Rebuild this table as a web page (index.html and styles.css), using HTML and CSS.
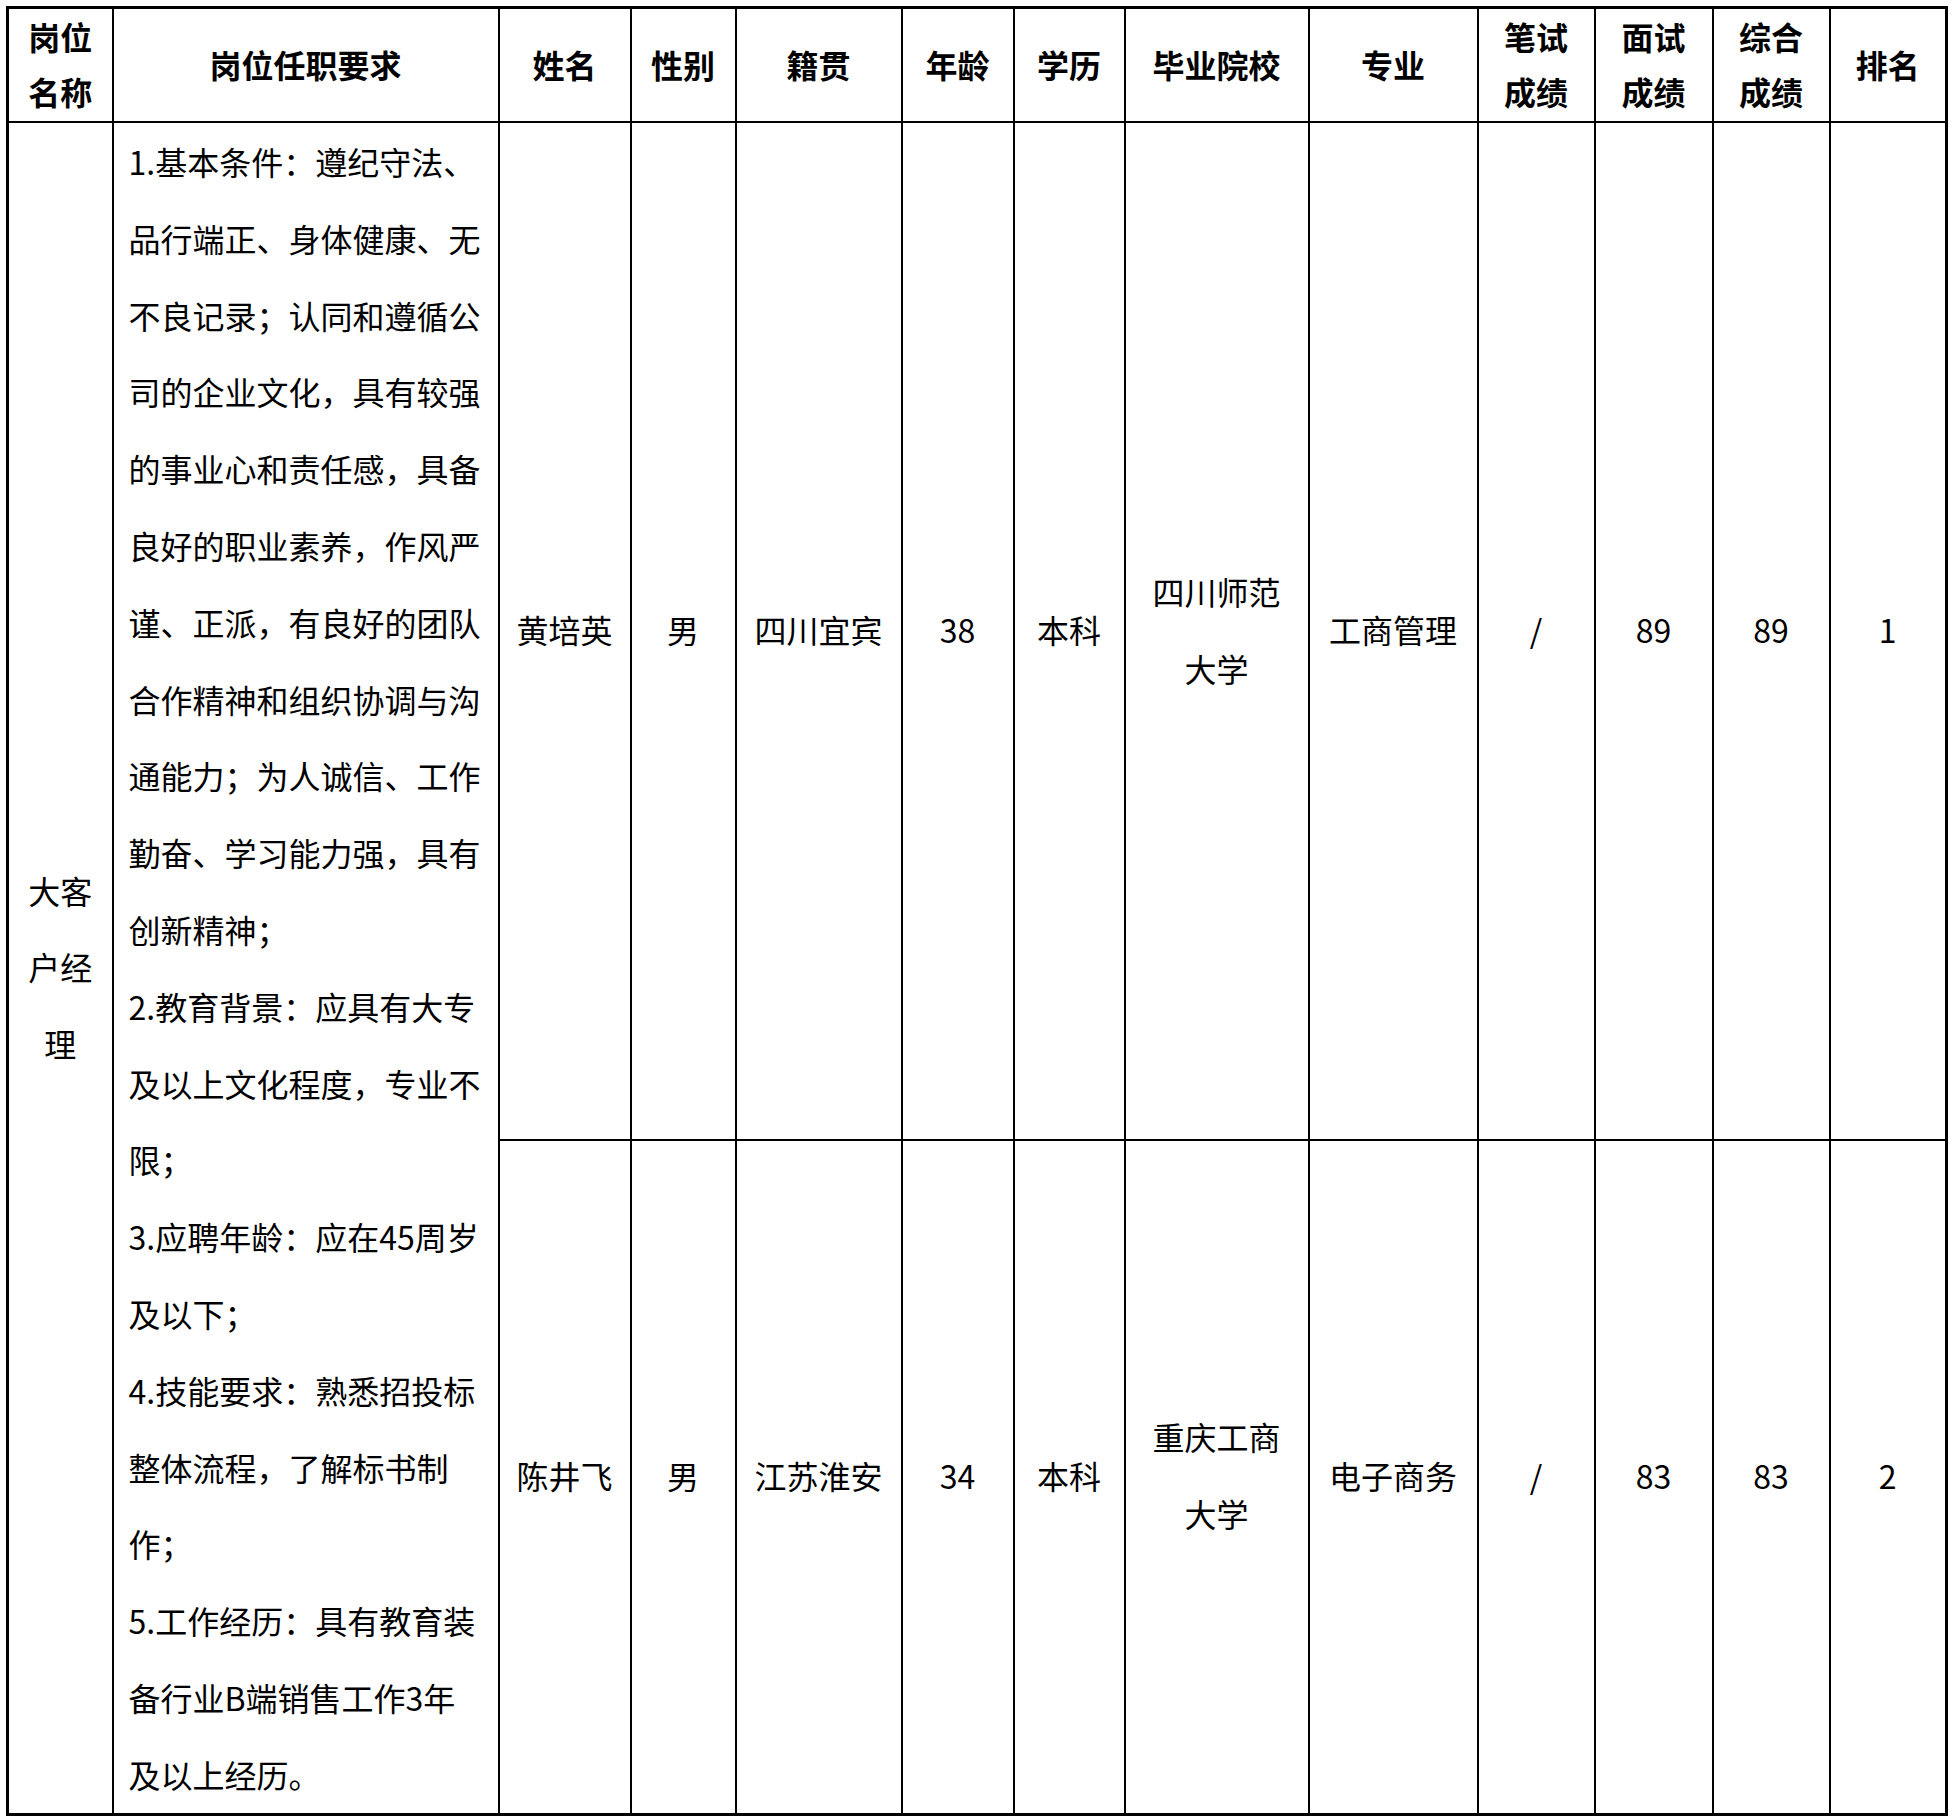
FILE: index.html
```html
<!DOCTYPE html>
<html lang="zh-CN">
<head>
<meta charset="utf-8">
<title>岗位任职要求</title>
<link rel="stylesheet" href="styles.css">
</head>
<body>
<table class="grid">
  <colgroup>
    <col class="w-post">
    <col class="w-req">
    <col class="w-name">
    <col class="w-sex">
    <col class="w-origin">
    <col class="w-age">
    <col class="w-edu">
    <col class="w-school">
    <col class="w-major">
    <col class="w-score">
    <col class="w-score2">
    <col class="w-score">
    <col class="w-score">
  </colgroup>
  <tr class="head">
    <th>岗位名称</th>
    <th>岗位任职要求</th>
    <th>姓名</th>
    <th>性别</th>
    <th>籍贯</th>
    <th>年龄</th>
    <th>学历</th>
    <th>毕业院校</th>
    <th>专业</th>
    <th>笔试成绩</th>
    <th>面试成绩</th>
    <th>综合成绩</th>
    <th>排名</th>
  </tr>
  <tr class="row1">
    <td rowspan="2" class="post">大客户经理</td>
    <td rowspan="2" class="req">
      <div>1.基本条件：遵纪守法、品行端正、身体健康、无不良记录；认同和遵循公司的企业文化，具有较强的事业心和责任感，具备良好的职业素养，作风严谨、正派，有良好的团队合作精神和组织协调与沟通能力；为人诚信、工作勤奋、学习能力强，具有创新精神；</div>
      <div>2.教育背景：应具有大专及以上文化程度，专业不限；</div>
      <div>3.应聘年龄：应在45周岁及以下；</div>
      <div>4.技能要求：熟悉招投标整体流程，了解标书制作；</div>
      <div>5.工作经历：具有教育装备行业B端销售工作3年及以上经历。</div>
    </td>
    <td>黄培英</td>
    <td>男</td>
    <td>四川宜宾</td>
    <td>38</td>
    <td>本科</td>
    <td>四川师范大学</td>
    <td>工商管理</td>
    <td>/</td>
    <td>89</td>
    <td>89</td>
    <td>1</td>
  </tr>
  <tr class="row2">
    <td>陈井飞</td>
    <td>男</td>
    <td>江苏淮安</td>
    <td>34</td>
    <td>本科</td>
    <td>重庆工商大学</td>
    <td>电子商务</td>
    <td>/</td>
    <td>83</td>
    <td>83</td>
    <td>2</td>
  </tr>
</table>
</body>
</html>
```

FILE: styles.css
```css
html, body {
  background: #fff;
}

body {
  margin: 0;
  padding: 6px 0 0 6px;
  font-family: "Noto Sans CJK SC", "Noto Sans", sans-serif;
  color: #000;
}

.grid {
  border-collapse: collapse;
  table-layout: fixed;
  width: 1942px;
  border: 3px solid #000;
}

.w-post { width: 105px; }
.w-req { width: 386px; }
.w-name { width: 132px; }
.w-sex { width: 105px; }
.w-origin { width: 166px; }
.w-age { width: 112px; }
.w-edu { width: 111px; }
.w-school { width: 184px; }
.w-major { width: 169px; }
.w-score { width: 117px; }
.w-score2 { width: 118px; }

.grid th,
.grid td {
  border: 2px solid #000;
  padding: 0 12px 3px;
  text-align: center;
  vertical-align: middle;
  font-size: 32px;
  line-height: 76.8px;
  font-weight: 400;
}

.grid th {
  font-weight: 700;
  line-height: 55px;
  padding-bottom: 2px;
}

.head { height: 114px; }
.row1 { height: 1018px; }
.row2 { height: 674px; }

.grid td.req {
  text-align: left;
  vertical-align: top;
  padding: 0 14px 0 15px;
}

.grid td.post {
  padding: 0 14px 2px;
}
```
